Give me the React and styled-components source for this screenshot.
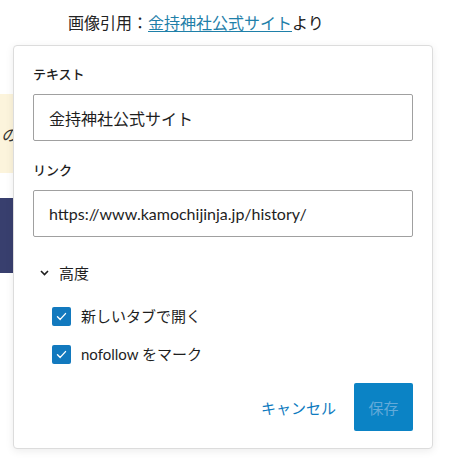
import React from 'react';
import styled, { createGlobalStyle } from 'styled-components';

const GlobalStyle = createGlobalStyle`
  body {
    margin: 0;
    background: #fff;
    font-family: Lato, "Noto Sans CJK JP", sans-serif;
    color: #1e1e1e;
  }
`;

const Page = styled.div`
  position: relative;
  width: 451px;
  height: 459px;
  overflow: hidden;
`;

const Caption = styled.p`
  margin: 0;
  padding: 12px 0 0 68px;
  height: 33px;
  font-size: 16px;
  line-height: 22px;
  color: #222;
`;

const CaptionLink = styled.a`
  color: #1f80a9;
  text-decoration: underline;
  text-underline-offset: 2px;
`;

const Block = styled.div`
  margin-top: ${p => p.gap}px;
  width: 300px;
  height: ${p => p.h}px;
  background: ${p => p.bg};
  display: flex;
  align-items: center;
`;

const BlockText = styled.span`
  padding-left: 1px;
  font-size: 16px;
  font-style: italic;
  font-family: "Liberation Serif", "Noto Sans CJK JP", serif;
  color: #333;
`;

const Popover = styled.div`
  position: absolute;
  top: 45px;
  left: 13px;
  width: 420px;
  height: 404px;
  box-sizing: border-box;
  background: #fff;
  border: 1px solid #dcdcdc;
  border-radius: 4px;
  box-shadow: 0 2px 8px rgba(0, 0, 0, 0.08);
  padding: 19px 19px 0 19px;
  display: flex;
  flex-direction: column;
`;

const Label = styled.label`
  display: block;
  margin-top: ${p => p.gap || 0}px;
  font-size: 13px;
  line-height: 18px;
  font-weight: 500;
  color: #1e1e1e;
`;

const Input = styled.div`
  margin-top: 11px;
  height: 47px;
  box-sizing: border-box;
  border: 1px solid #a0a0a0;
  border-radius: 2px;
  padding: 0 15px;
  display: flex;
  align-items: center;
  font-size: 16px;
  color: #1e1e1e;
  white-space: nowrap;
`;

const Advanced = styled.div`
  margin-top: 26px;
  display: flex;
  align-items: center;
  gap: 10px;
  padding-left: 7px;
  font-size: 15px;
  line-height: 20px;
  color: #1e1e1e;
`;

const Options = styled.div`
  margin-top: 24px;
  padding-left: 19px;
  display: flex;
  flex-direction: column;
  gap: 19px;
`;

const Option = styled.div`
  display: flex;
  align-items: center;
  gap: 10px;
  font-size: 15px;
  line-height: 19px;
  color: #1e1e1e;
`;

const Box = styled.span`
  width: 19px;
  height: 19px;
  border-radius: 2px;
  background: #1279be;
  display: flex;
  align-items: center;
  justify-content: center;
`;

const Actions = styled.div`
  margin-top: 19px;
  display: flex;
  justify-content: flex-end;
  align-items: center;
  gap: 18px;
`;

const TextButton = styled.button`
  border: none;
  background: none;
  padding: 0;
  font-family: inherit;
  font-size: 15px;
  color: #0f7bc0;
`;

const SaveButton = styled.button`
  width: 59px;
  height: 48px;
  border: none;
  border-radius: 2px;
  background: #0b83c5;
  color: #63aad9;
  font-family: inherit;
  font-size: 15px;
`;

const Check = () => (
  <Box>
    <svg width="13" height="13" viewBox="0 0 13 13" fill="none">
      <path d="M2.5 6.8 L5.2 9.4 L10.5 3.6" stroke="#fff" strokeWidth="1.4" strokeLinecap="round" strokeLinejoin="round" />
    </svg>
  </Box>
);

export default function App() {
  return (
    <Page>
      <GlobalStyle />
      <Caption>
        画像引用：<CaptionLink href="#">金持神社公式サイト</CaptionLink>より
      </Caption>
      <Block gap={49} h={79} bg="#fcf4dc">
        <BlockText>の</BlockText>
      </Block>
      <Block gap={25} h={75} bg="#383f6e" />
      <Popover>
        <Label>テキスト</Label>
        <Input>金持神社公式サイト</Input>
        <Label gap={20}>リンク</Label>
        <Input>https://www.kamochijinja.jp/history/</Input>
        <Advanced>
          <svg width="9" height="6" viewBox="0 0 9 6" fill="none">
            <path d="M1 1 L4.5 4.5 L8 1" stroke="#1e1e1e" strokeWidth="1.6" />
          </svg>
          高度
        </Advanced>
        <Options>
          <Option><Check />新しいタブで開く</Option>
          <Option><Check />nofollow をマーク</Option>
        </Options>
        <Actions>
          <TextButton>キャンセル</TextButton>
          <SaveButton>保存</SaveButton>
        </Actions>
      </Popover>
    </Page>
  );
}
